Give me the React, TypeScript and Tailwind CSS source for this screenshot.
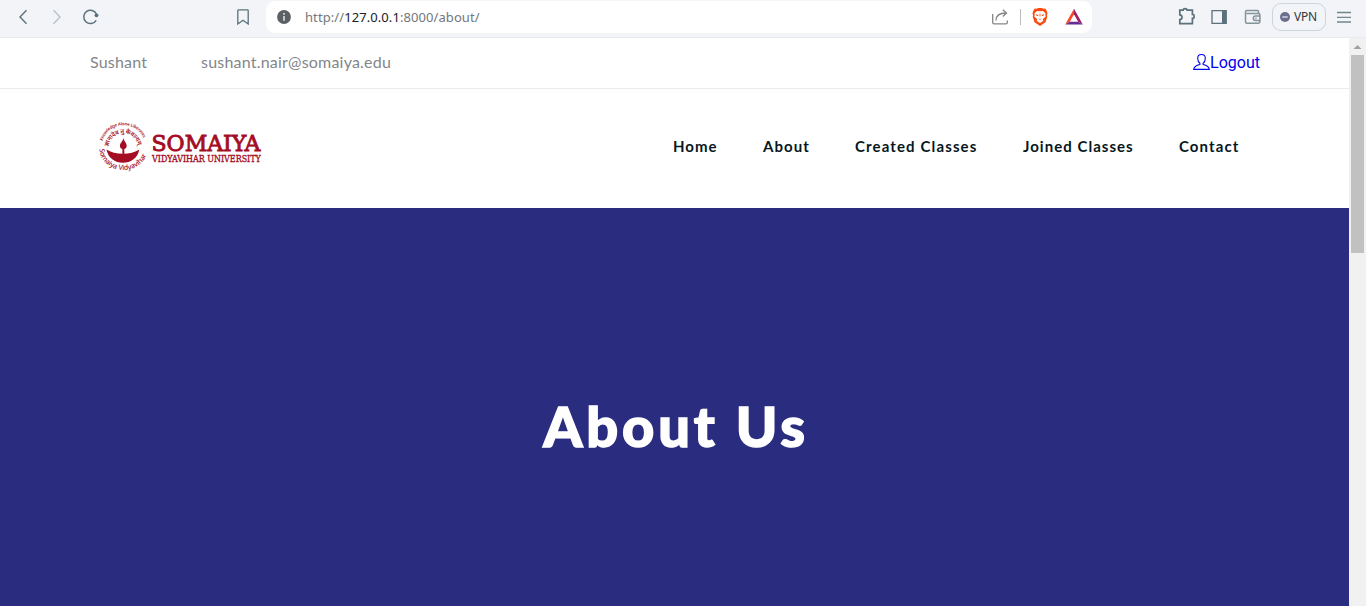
import React from "react";

const navItems = [
  { label: "Home", className: "w-[90px] tracking-[1px]" },
  { label: "About", className: "w-[92px] tracking-[1.05px]" },
  { label: "Created Classes", className: "w-[168px] tracking-[1.13px]" },
  { label: "Joined Classes", className: "w-[156px] tracking-[1.03px]" },
  { label: "Contact", className: "w-[70px] tracking-[1.1px]" },
];

function BrowserBar() {
  return (
    <div className="flex h-[38px] shrink-0 items-start border-b border-[#e9ebec] bg-[#f2f4f7] text-[#5b717b]">
      <svg className="h-[34px] w-[266px] shrink-0" viewBox="0 0 266 34" fill="none" stroke="#5b717b" strokeWidth="1.4">
        <path d="M26.5 10.2 20 17l6.500 6.800" />
        <path d="M53.500 10.200 60 17l-6.500 6.800" stroke="#b7c3c8" />
        <path d="M96.200 20.300A6.700 6.700 0 1 1 96.600 14.200" strokeWidth="1.500" />
        <circle cx="96.500" cy="15.300" r="1.900" fill="#5b717b" stroke="none" />
        <path d="M238.500 9.800h9q.7 0 .7.800V24l-5.200-3.700-5.200 3.700V10.600q0-.8.7-.8Z" strokeWidth="1.300" />
      </svg>
      <div className="mt-px flex h-8 w-[826px] shrink-0 items-center rounded-[9px] bg-white">
        <svg className="ml-[11px] h-[14px] w-[14px]" viewBox="0 0 14 14">
          <circle cx="7" cy="7" r="6.900" fill="#5b6064" />
          <path d="M7 3v1.700M7 6.100v4.600" stroke="#d6dadd" strokeWidth="1.700" />
        </svg>
        <div className="ml-[14px] w-[180px] whitespace-nowrap font-['Noto_Sans',sans-serif] text-[13px] leading-8 tracking-[0.08px] text-[#73777a]">
          http://<span className="text-[#202124]">127.0.0.1</span>:8000/about/
        </div>
        <svg className="ml-auto h-8 w-[106px]" viewBox="986 1 106 32" fill="none">
          <path d="M992.700 14v8.500q0 1.300 1.300 1.300h12q1.300 0 1.300-1.300V20.500M996 20.500c0-5 4-7.500 10-7.500M1002.800 9.700l3.700 3.300-3.700 3.500" stroke="#858585" strokeWidth="1.300" />
          <path d="M1020.500 9v16" stroke="#bcbcbc" />
          <path d="m1034.800 8.500 1.900.3 1.400-.8h3.800l1.400.8 1.900-.3 1.400 1.900.9 3-.5 1.500.2 2-1.700 5.400-5.500 3.600-5.500-3.600-1.700-5.400.2-2-.5-1.500.9-3Z" fill="#fb4b12" />
          <path d="m1040 11.300 3-.3 2.600 2.600-.4 1.300.6 1.300-1.600 1.900-1.200.6.200 2.200-3.200 2.200-3.200-2.200.2-2.200-1.200-.6-1.600-1.900.6-1.300-.4-1.300 2.600-2.600Z" fill="#fff" />
          <path d="m1036 14.200 2.500.8-.4.900-2-.5zm8 0-2.500.8.400.9 2-.5zM1038.500 18.400l1.500.7 1.500-.7-1.500 1.500ZM1039.600 13.500h.8v3h-.8Z" fill="#fb4b12" />
          <path d="M1074 8.800v5.500l-4.200 7.400-4.600 2.900Z" fill="#ff4724" />
          <path d="m1074 8.800 8.800 15.800-4.600-2.900-4.200-7.400Z" fill="#9e1f63" />
          <path d="m1065.200 24.600 4.600-2.900h8.400l4.600 2.900Z" fill="#662d91" />
        </svg>
      </div>
      <svg className="ml-[80px] h-[34px] w-[100px] shrink-0" viewBox="1172 0 100 34" fill="none" stroke="#5b717b" strokeWidth="1.500">
        <path d="M1179.800 10.200h3.300c.2-2.100 3.800-2.100 4 0h5.300v4.200c2.300 0 2.300 4 0 4v5.200h-12.600v-4c3-.2 3-4.600 0-4.800Z" strokeWidth="1.700" />
        <path d="M1212 10.700h14v12.600h-14Z" strokeWidth="1.300" />
        <path d="M1222 10h4.700v14h-4.700Z" fill="#5b717b" stroke="none" />
        <path d="M1258.500 13.300V11.500q0-.9-.9-.9H1247q-1.500 0-1.500 1.500v9.600q0 1.500 1.500 1.500h11.500q1.400 0 1.400-1.400v-7q0-1.400-1.400-1.400h-12M1259.500 16h-4a2.200 2.200 0 0 0 0 4.400h4M1255.300 18.200h1.300" stroke="#82939b" strokeWidth="1.500" />
      </svg>
      <div className="mt-[3px] flex h-[28px] w-[54px] shrink-0 items-center rounded-[9px] border border-[#cbd5db] pl-[7px]">
        <svg className="h-[10px] w-[10px]" viewBox="0 0 10 10">
          <circle cx="5" cy="5" r="5" fill="#6b6f8d" />
          <path d="M2.300 5h5.400" stroke="#e4e7ee" strokeWidth="1.300" />
        </svg>
        <span className="ml-[4px] font-['Noto_Sans',sans-serif] text-[12px] tracking-[-0.2px] text-[#303943]">VPN</span>
      </div>
      <svg className="ml-[10px] h-[34px] w-[18px] shrink-0" viewBox="1336 0 18 34" stroke="#728690" strokeWidth="1.300">
        <path d="M1337 12.500h14M1337 17.300h14M1337 22h14" />
      </svg>
    </div>
  );
}

function UniversityLogo() {
  return (
    <svg className="mb-[3px] h-[56px] w-[170px]" viewBox="95 119 170 56" role="img" aria-label="Somaiya Vidyavihar University">
      <defs>
        <path id="outer-arc" d="M102.500 141A22 22 0 0 1 145 142" />
        <path id="motto-arc" d="M108.500 147A14.800 14.800 0 0 1 138 147" />
        <path id="base-arc" d="M99.500 149A24 21.500 0 0 0 147.500 148" />
      </defs>
      <g fill="#a50d24" className="font-['Noto_Sans',sans-serif] font-semibold">
        <text fontSize="4.300"><textPath href="#outer-arc" textLength="53">Knowledge Alone Liberates</textPath></text>
        <text fontSize="6.200"><textPath href="#motto-arc" textLength="42">ज्ञानादेव तु कैवल्यम्</textPath></text>
        <text fontSize="7" fontWeight="500"><textPath href="#base-arc" textLength="64">Somaiya Vidyavihar</textPath></text>
        <path d="M106.500 149.500c8 5.700 25 5.700 32.800 0-1.600 8.500-8.200 13.300-16.300 13.300s-14.900-4.800-16.500-13.300Z" />
        <path d="M123.300 137.200c-.1 3.300 3.400 5.400 3.400 8.700 0 1.900-1.500 3.200-3.400 3.200s-3.400-1.300-3.400-3.200c0-3.300 3.500-4.600 3.400-8.700ZM122.400 148h1.900v6h-1.900Z" />
        <text x="151.500" y="151.300" stroke="#a50d24" strokeWidth="0.9" className="font-['DejaVu_Serif',serif] text-[22px] font-normal" textLength="109" lengthAdjust="spacingAndGlyphs">SOMAIYA</text>
        <text x="152" y="161.600" stroke="#a50d24" strokeWidth="0.35" className="font-['DejaVu_Serif',serif] text-[9.4px] font-normal" textLength="108.800" lengthAdjust="spacingAndGlyphs">VIDYAVIHAR UNIVERSITY</text>
      </g>
    </svg>
  );
}

function Scrollbar() {
  return (
    <div className="flex w-[17px] shrink-0 flex-col items-center bg-[#f1f1f1]">
      <svg className="h-[17px] w-[17px] shrink-0" viewBox="0 0 17 17">
        <path d="M4.500 11h8L8.500 7Z" fill="#a1a1a1" />
      </svg>
      <div className="h-[198px] w-[13px] bg-[#c1c1c1]" />
    </div>
  );
}

export default function App() {
  return (
    <div className="flex h-[606px] w-[1366px] flex-col overflow-hidden bg-white font-['Lato',sans-serif]">
      <BrowserBar />
      <div className="flex min-h-0 flex-1">
        <div className="flex w-[1349px] flex-col">
          <div className="flex h-[51px] shrink-0 items-center border-b border-[#ebebeb] pl-[90px] pr-[89px] text-[16px] text-[#83868b]">
            <span className="w-[111px] pb-0.5 tracking-[0.2px]">Sushant</span>
            <span className="pb-0.5 tracking-[0.21px]">sushant.nair@somaiya.edu</span>
            <a className="ml-auto flex items-center font-['Roboto',sans-serif] text-[16px] text-[#0000ee]">
              <svg className="mb-0.5 h-[18px] w-[17px]" viewBox="0 0 17 18" fill="none" stroke="#0000ee" strokeWidth="1.100">
                <path d="M8.500 1.500c-2.300 0-3.800 1.500-3.800 3.700 0 2.400 1 4.200 2.200 5v1.300c-3.500.8-5.900 2-6.200 4.900h15.600c-.3-2.900-2.700-4.100-6.200-4.900v-1.300c1.200-.8 2.200-2.600 2.200-5 0-2.200-1.500-3.700-3.800-3.700Z" />
              </svg>
              Logout
            </a>
          </div>
          <header className="flex h-[119px] shrink-0 items-center pl-[95px]">
            <UniversityLogo />
            <nav className="ml-[408px] flex pb-1 text-[15px] font-bold text-[#061720]">
              {navItems.map((item) => (
                <a key={item.label} className={`whitespace-nowrap ${item.className}`}>{item.label}</a>
              ))}
            </nav>
          </header>
          <main className="flex flex-1 justify-center bg-[#2a2c7f] pl-[3px] pt-[183px]">
            <h1 className="text-[56px] font-black leading-[70px] tracking-[3.8px] text-white [-webkit-text-stroke:1.4px_white]">About Us</h1>
          </main>
        </div>
        <Scrollbar />
      </div>
    </div>
  );
}
